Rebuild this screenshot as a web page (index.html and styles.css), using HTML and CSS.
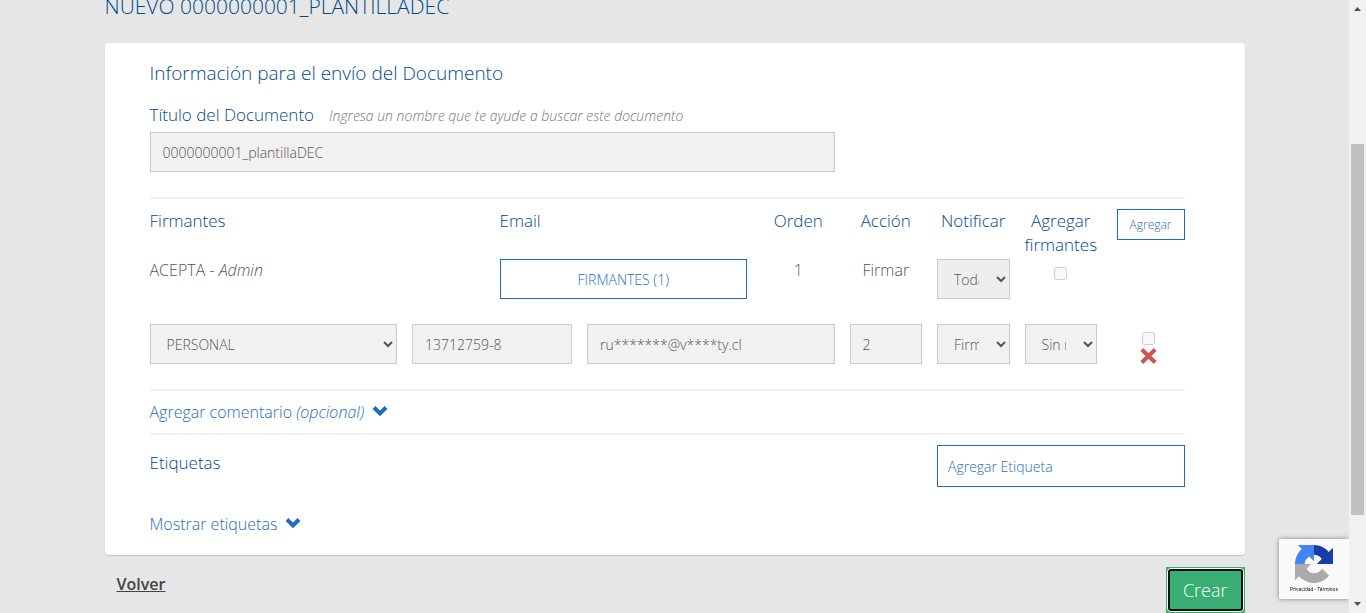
FILE: index.html
```html
<!DOCTYPE html>
<html lang="es">
<head>
<meta charset="utf-8">
<title>Nuevo documento</title>
<link rel="stylesheet" href="styles.css">
</head>
<body>
<div class="viewport">
  <main class="container">
    <h1 class="page-title">NUEVO 0000000001_PLANTILLADEC</h1>
    <form class="card">
      <h2 class="card-title">Información para el envío del Documento</h2>
      <div class="grid">
        <div class="span-8">
          <div class="title-line">
            <label class="label" for="titulo">Título del Documento</label>
            <em class="hint">Ingresa un nombre que te ayude a buscar este documento</em>
          </div>
          <input class="field" id="titulo" type="text" value="0000000001_plantillaDEC">
        </div>
      </div>
      <hr class="rule rule-title">
      <div class="grid signers-head">
        <div class="label span-4">Firmantes</div>
        <div class="label span-3">Email</div>
        <div class="label center">Orden</div>
        <div class="label center">Acción</div>
        <div class="label center">Notificar</div>
        <div class="label center">Agregar firmantes</div>
        <button class="outline small" type="button">Agregar</button>
      </div>
      <div class="grid signer">
        <div class="text span-4">ACEPTA - <em>Admin</em></div>
        <button class="outline span-3" type="button">FIRMANTES (1)</button>
        <div class="text center">1</div>
        <div class="text center">Firmar</div>
        <select class="field strong" aria-label="Notificar"><option>Todas</option></select>
        <div class="check-cell"><input class="check" type="checkbox" aria-label="Agregar firmantes" disabled></div>
      </div>
      <div class="grid signer">
        <select class="field span-3" aria-label="Tipo de firmante"><option>PERSONAL</option></select>
        <input class="field span-2" type="text" aria-label="RUT" value="13712759-8">
        <input class="field span-3" type="text" aria-label="Email" value="ru*******@v****ty.cl">
        <input class="field" type="text" aria-label="Orden" value="2">
        <select class="field" aria-label="Acción"><option>Firmar</option></select>
        <select class="field" aria-label="Notificar"><option>Sin notificar</option></select>
        <div class="check-cell">
          <input class="check" type="checkbox" aria-label="Agregar firmantes" disabled>
          <button class="remove" type="button" aria-label="Eliminar firmante">
            <svg width="17" height="16" viewBox="0 0 17 16"><path d="M1.800 1.500 15.200 14.500M15.200 1.500 1.800 14.500" fill="none" stroke="#cf5450" stroke-width="4"/></svg>
          </button>
        </div>
      </div>
      <hr class="rule">
      <a class="toggle" href="#comentario"><span>Agregar comentario <em>(opcional)</em></span>
        <svg class="chevron" width="16" height="12" viewBox="0 0 16 12"><path d="M2 1.500 8 7.500 14 1.500" fill="none" stroke="#1b6ec2" stroke-width="4"/></svg></a>
      <hr class="rule">
      <div class="grid tags">
        <label class="label span-9" for="etiqueta">Etiquetas</label>
        <input class="tag-input span-3" id="etiqueta" type="text" placeholder="Agregar Etiqueta">
      </div>
      <a class="toggle" href="#etiquetas"><span>Mostrar etiquetas</span>
        <svg class="chevron" width="16" height="12" viewBox="0 0 16 12"><path d="M2 1.500 8 7.500 14 1.500" fill="none" stroke="#1b6ec2" stroke-width="4"/></svg></a>
    </form>
    <div class="actions">
      <a class="back" href="#volver">Volver</a>
      <button class="create" type="button"><span class="create-ring">Crear</span></button>
    </div>
  </main>
  <aside class="captcha">
    <svg width="38" height="38" viewBox="0 0 64 64">
      <path d="M64 31.955l-.033-1.370V4.687l-7.160 7.160C50.948 4.674 42.033.093 32.050.093c-10.400 0-19.622 4.960-25.458 12.640l11.736 11.860a15.550 15.550 0 0 1 4.754-5.334c2.050-1.600 4.952-2.906 8.968-2.906.485 0 .860.057 1.135.163 4.976.393 9.288 3.140 11.828 7.124l-8.307 8.307L64 31.953" fill="#1c3aa9"/>
      <path d="M31.862.094l-1.370.033H4.594l7.160 7.160C4.580 13.147 0 22.060 0 32.046c0 10.400 4.960 19.622 12.640 25.458L24.500 45.768a15.550 15.550 0 0 1-5.334-4.754c-1.600-2.050-2.906-4.952-2.906-8.968 0-.485.057-.860.163-1.135.393-4.976 3.140-9.288 7.124-11.828l8.307 8.307L31.860.095" fill="#4285f4"/>
      <path d="M.001 32.045l.033 1.370v25.898l7.160-7.160c5.860 7.173 14.774 11.754 24.760 11.754 10.400 0 19.622-4.960 25.458-12.640l-11.736-11.860a15.550 15.550 0 0 1-4.754 5.334c-2.050 1.600-4.952 2.906-8.968 2.906-.485 0-.860-.057-1.135-.163-4.976-.393-9.288-3.140-11.828-7.124l8.307-8.307c-10.522.040-22.400.066-27.295-.005" fill="#ababab"/>
    </svg>
    <div class="captcha-links"><a href="#privacidad">Privacidad</a> - <a href="#terminos">Términos</a></div>
  </aside>
</div>
<div class="scrollbar" aria-hidden="true">
  <svg width="17" height="17" viewBox="0 0 17 17"><path d="M5 11h7L8.500 7z" fill="#505050"/></svg>
  <div class="track"><div class="thumb"></div></div>
  <svg width="17" height="17" viewBox="0 0 17 17"><path d="M5 6h7L8.500 10z" fill="#505050"/></svg>
</div>
</body>
</html>
```
FILE: styles.css
```css
* { box-sizing: border-box; }

body {
  margin: 0;
  display: flex;
  height: 100vh;
  overflow: hidden;
  background: #e6e6e6;
  color: #555;
  font-family: "Open Sans", sans-serif;
  font-weight: 300;
  font-size: 14px;
}

input, select, button { font: inherit; color: inherit; margin: 0; }

.viewport { flex: 1; min-width: 0; height: 100vh; overflow: hidden; }
.container { max-width: 1170px; margin: 0 auto; padding: 0 15px; }

.page-title {
  margin: -8px 0 23px;
  font-size: 21px;
  line-height: 28px;
  font-weight: 300;
  color: #00498f;
}

.card {
  padding: 16px 60px 10px 45px;
  background: #fff;
  border-radius: 4px;
  box-shadow: 0 1px 1px #c0c0c0;
}

.card-title {
  margin: 0 0 16px;
  font-size: 19px;
  line-height: 28px;
  font-weight: 300;
  color: #00498f;
}

.grid { display: grid; grid-template-columns: repeat(12, minmax(0, 1fr)); column-gap: 15px; }
.span-2 { grid-column: span 2; }
.span-3 { grid-column: span 3; }
.span-4 { grid-column: span 4; }
.span-8 { grid-column: span 8; }
.span-9 { grid-column: span 9; }

.label { font-size: 17px; line-height: 24px; color: #00498f; }
.text { font-size: 16px; line-height: 22px; }
.center { text-align: center; }
.title-line { display: flex; align-items: baseline; gap: 15px; margin-bottom: 5px; }
.hint { color: #777; }

.field {
  width: 100%;
  height: 40px;
  padding: 6px 12px;
  border: 1px solid #ccc;
  border-radius: 0;
  background-color: #f1f1f1;
}
select.field { padding-right: 14px; }
.strong { background-color: #eee; }

.rule { height: 2px; margin: 0; border: 0; background: #f1f1f1; }
.rule-title { margin-top: 25px; }

.signers-head { padding-top: 10px; margin-bottom: 2px; }
.signer { margin-bottom: 25px; }

.outline {
  height: 40px;
  border: 1px solid #1b6ec2;
  background: #fff;
  color: #1b6ec2;
}
.small { height: 31px; justify-self: end; padding: 0 12px; font-size: 12px; }

.check-cell { display: flex; flex-direction: column; align-items: center; padding-top: 8px; }
.check { width: 13px; height: 13px; }
.remove { display: flex; margin-top: 3px; padding: 0; border: 0; background: none; }

.toggle {
  display: flex;
  align-items: center;
  gap: 8px;
  height: 42px;
  font-size: 16px;
  color: #1b6ec2;
  text-decoration: none;
}

.tags { padding: 10px 0 16px; }
.tags .label { padding-top: 6px; }
.tag-input {
  width: 100%;
  height: 42px;
  padding: 0 10px;
  border: 1px solid #1b6ec2;
  background: #fff;
}
.tag-input::placeholder { color: #1b6ec2; }

.actions { display: flex; justify-content: space-between; align-items: flex-start; padding: 12px 0 0 12px; }
.back { margin-top: 6px; font-size: 16px; line-height: 22px; font-weight: 600; color: #444; }
.create {
  padding: 1px;
  border: 0;
  background: #38ae72;
  font-size: 18px;
  color: #fff;
}
.create-ring {
  display: block;
  padding: 0 16px;
  border-radius: 4px;
  box-shadow: inset 0 0 0 1px #fff, inset 0 0 0 3px #101010;
  line-height: 44px;
}

.captcha {
  position: fixed;
  right: 17px;
  bottom: 14px;
  width: 70px;
  height: 60px;
  padding-top: 6px;
  border-radius: 2px 0 0 2px;
  background: #f9f9f9;
  box-shadow: 0 0 5px gray;
  text-align: center;
  overflow: hidden;
}
.captcha svg { display: block; margin: 0 auto; }
.captcha-links { font-family: Roboto, sans-serif; font-size: 5px; line-height: 12px; font-weight: 400; color: #222; }
.captcha-links a { color: inherit; text-decoration: none; }

.scrollbar { position: relative; display: flex; flex-direction: column; width: 17px; height: 100vh; background: #f1f1f1; }
.track { flex: 1; display: grid; grid-template-rows: 127fr 371fr 81fr; padding: 0 2px; }
.thumb { grid-row: 2; background: #c1c1c1; }
```
